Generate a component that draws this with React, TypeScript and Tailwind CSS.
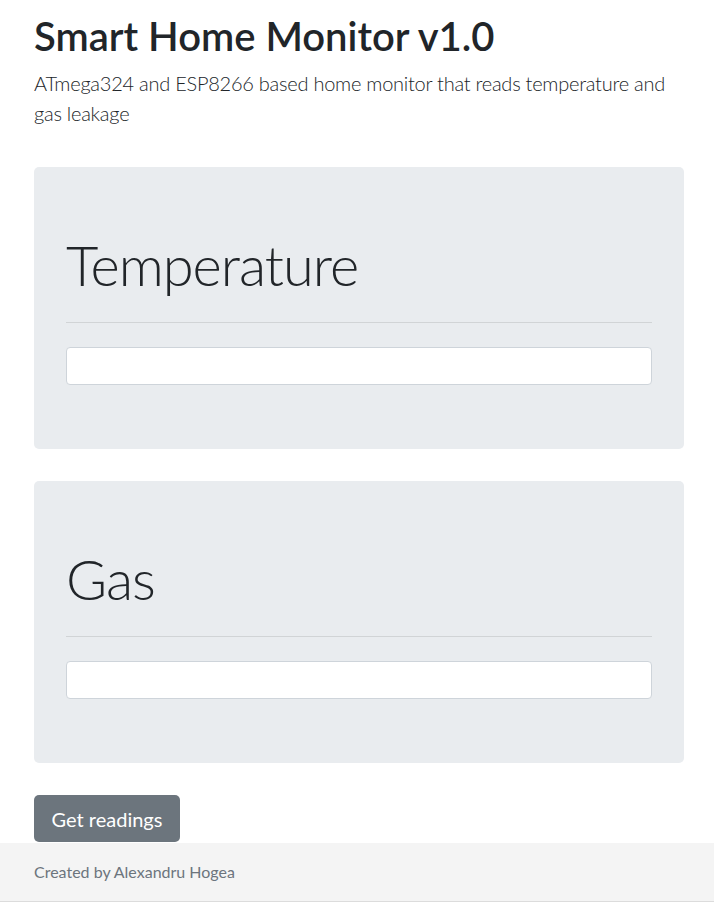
import React from 'react';

const font = { fontFamily: 'Lato, "Open Sans", "Liberation Sans", sans-serif' };

const Panel: React.FC<{ title: string }> = ({ title }) => (
  <div className="rounded-[5px] bg-[#e9ecef] px-8 pt-[64px] pb-[64px]">
    <h1 className="text-[56px] font-light leading-[1.2] tracking-[-1px] text-[#212529]">{title}</h1>
    <hr className="mt-6 mb-6 border-t border-black/10" />
    <input
      type="text"
      className="block h-[38px] w-full rounded-[4px] border border-[#ced4da] bg-white px-3"
    />
  </div>
);

const App: React.FC = () => {
  return (
    <div className="min-h-screen bg-white text-[#212529]" style={font}>
      <main className="pt-3 pr-[30px] pl-[34px]">
        <h1 className="mb-2 text-[40px] font-semibold leading-[1.2]">Smart Home Monitor v1.0</h1>
        <p className="mb-[39px] text-[20px] font-light leading-[1.5] tracking-[-0.25px]">
          ATmega324 and ESP8266 based home monitor that reads temperature and gas leakage
        </p>
        <div className="flex flex-col gap-8">
          <Panel title="Temperature" />
          <Panel title="Gas" />
          <div>
            <button className="h-[47px] w-[146px] rounded-[5px] bg-[#6c757d] text-[20px] text-white">
              Get readings
            </button>
          </div>
        </div>
      </main>
      <footer className="mt-px flex h-[59px] items-center border-b border-[#dcdcdc] bg-[#f4f4f4] px-[34px]">
        <span className="text-[16px] text-[#6c757d]">Created by Alexandru Hogea</span>
      </footer>
    </div>
  );
};

export default App;
